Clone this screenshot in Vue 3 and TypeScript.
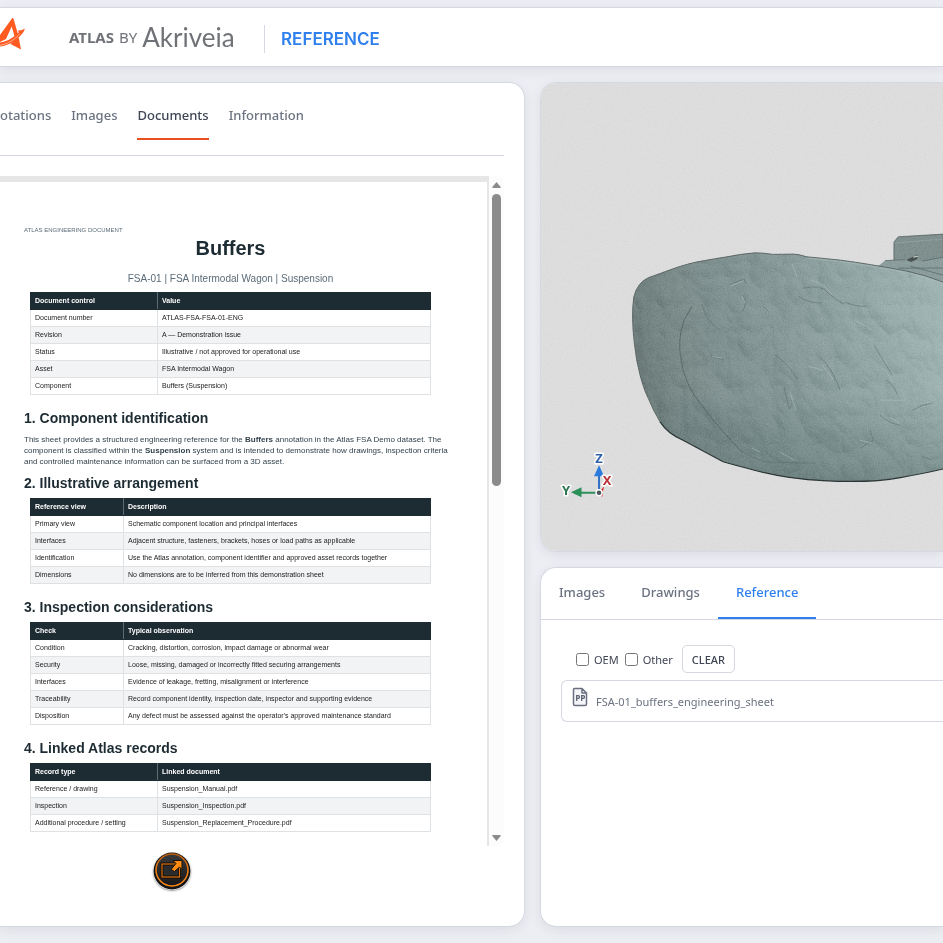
<script setup lang="ts">
import { ref } from 'vue'

interface DocTable {
  head: [string, string]
  rows: [string, string][]
  wide: boolean
}

const mainTabs = ['otations', 'Images', 'Documents', 'Information']
const activeMain = ref('Documents')
const refTabs = ['Images', 'Drawings', 'Reference']
const activeRef = ref('Reference')
const oem = ref(false)
const other = ref(false)

const control: DocTable = {
  head: ['Document control', 'Value'],
  wide: true,
  rows: [
    ['Document number', 'ATLAS-FSA-FSA-01-ENG'],
    ['Revision', 'A — Demonstration issue'],
    ['Status', 'Illustrative / not approved for operational use'],
    ['Asset', 'FSA Intermodal Wagon'],
    ['Component', 'Buffers (Suspension)'],
  ],
}

const sections: { title: string; table: DocTable }[] = [
  {
    title: '2. Illustrative arrangement',
    table: {
      head: ['Reference view', 'Description'],
      wide: false,
      rows: [
        ['Primary view', 'Schematic component location and principal interfaces'],
        ['Interfaces', 'Adjacent structure, fasteners, brackets, hoses or load paths as applicable'],
        ['Identification', 'Use the Atlas annotation, component identifier and approved asset records together'],
        ['Dimensions', 'No dimensions are to be inferred from this demonstration sheet'],
      ],
    },
  },
  {
    title: '3. Inspection considerations',
    table: {
      head: ['Check', 'Typical observation'],
      wide: false,
      rows: [
        ['Condition', 'Cracking, distortion, corrosion, impact damage or abnormal wear'],
        ['Security', 'Loose, missing, damaged or incorrectly fitted securing arrangements'],
        ['Interfaces', 'Evidence of leakage, fretting, misalignment or interference'],
        ['Traceability', 'Record component identity, inspection date, inspector and supporting evidence'],
        ['Disposition', "Any defect must be assessed against the operator's approved maintenance standard"],
      ],
    },
  },
  {
    title: '4. Linked Atlas records',
    table: {
      head: ['Record type', 'Linked document'],
      wide: true,
      rows: [
        ['Reference / drawing', 'Suspension_Manual.pdf'],
        ['Inspection', 'Suspension_Inspection.pdf'],
        ['Additional procedure / setting', 'Suspension_Replacement_Procedure.pdf'],
      ],
    },
  },
]

function clearFilters(): void {
  oem.value = false
  other.value = false
}
</script>

<template>
  <div class="page">
    <header class="topbar">
      <svg class="logo" viewBox="0 0 26 34" aria-hidden="true">
        <path d="M12.300 1 L0 18 V25 L6 22 L11.700 9.500 L15 21 L18.300 18.500 L13.500 1.500 Z" fill="#ff5a1f" />
        <path d="M0 25.500 C8 24.500 15 19.500 19 15 L17.500 13.800 L22 13 L25 11.500 L23.500 15 C18 22.500 10 28.500 0 29.500 Z" fill="#ff5a1f" />
        <path d="M14.300 23.500 L18.700 20.500 L21 32.500 L10.500 27 Z" fill="#ff5a1f" />
        <path d="M0 28.300 C8 27 15 22.500 20 16.500" fill="none" stroke="#ffffff" stroke-width="0.500" />
      </svg>
      <div class="brand">
        <span class="brand-atlas">ATLAS</span>
        <span class="brand-by">BY</span>
        <span class="brand-name">Akriveia</span>
      </div>
      <h1 class="mode">REFERENCE</h1>
    </header>

    <main class="layout">
      <section class="card documents">
        <nav class="tabs">
          <button
            v-for="tab in mainTabs"
            :key="tab"
            type="button"
            class="tab"
            :class="{ active: tab === activeMain }"
            @click="activeMain = tab"
          >{{ tab }}</button>
        </nav>

        <div class="viewer">
          <article class="sheet">
            <p class="kicker">ATLAS ENGINEERING DOCUMENT</p>
            <h2 class="doc-title">Buffers</h2>
            <p class="doc-sub">FSA-01 | FSA Intermodal Wagon | Suspension</p>
            <table class="grid wide">
              <thead>
                <tr><th v-for="h in control.head" :key="h">{{ h }}</th></tr>
              </thead>
              <tbody>
                <tr v-for="row in control.rows" :key="row[0]">
                  <td>{{ row[0] }}</td>
                  <td>{{ row[1] }}</td>
                </tr>
              </tbody>
            </table>
            <h3>1. Component identification</h3>
            <p class="body-text">
              This sheet provides a structured engineering reference for the <b>Buffers</b> annotation in the Atlas FSA Demo dataset. The<br />
              component is classified within the <b>Suspension</b> system and is intended to demonstrate how drawings, inspection criteria<br />
              and controlled maintenance information can be surfaced from a 3D asset.
            </p>
            <template v-for="s in sections" :key="s.title">
              <h3>{{ s.title }}</h3>
              <table class="grid" :class="{ wide: s.table.wide }">
                <thead>
                  <tr><th v-for="h in s.table.head" :key="h">{{ h }}</th></tr>
                </thead>
                <tbody>
                  <tr v-for="row in s.table.rows" :key="row[0]">
                    <td>{{ row[0] }}</td>
                    <td>{{ row[1] }}</td>
                  </tr>
                </tbody>
              </table>
            </template>
          </article>
          <div class="scrollbar">
            <svg viewBox="0 0 9 6" class="arrow"><path d="M4.500 0 L8.700 5 Q9 6 8 6 H1 Q0 6 .3 5 Z" fill="#8b8b8b" /></svg>
            <div class="track"><div class="thumb"></div></div>
            <svg viewBox="0 0 9 6" class="arrow"><path d="M4.500 6 L8.700 1 Q9 0 8 0 H1 Q0 0 .3 1 Z" fill="#8b8b8b" /></svg>
          </div>
        </div>

        <button type="button" class="popout" aria-label="Open document">
          <svg viewBox="0 0 38 38">
            <defs>
              <linearGradient id="disc" x1="0" y1="0" x2="0" y2="1">
                <stop offset="0" stop-color="#3a3a3c" />
                <stop offset="1" stop-color="#18181a" />
              </linearGradient>
              <linearGradient id="ring" x1="0" y1="0" x2="0" y2="1">
                <stop offset="0" stop-color="#b85c0c" />
                <stop offset="0.500" stop-color="#f07d10" />
                <stop offset="1" stop-color="#ff8a14" />
              </linearGradient>
            </defs>
            <circle cx="19" cy="19" r="18.500" fill="#151517" />
            <circle cx="19" cy="18" r="16" fill="url(#disc)" stroke="url(#ring)" stroke-width="1.500" />
            <rect x="9" y="12" width="17.500" height="13" fill="#2a2b2d" stroke="#120c06" stroke-width="3" />
            <rect x="9" y="12" width="17.500" height="13" fill="none" stroke="#d9700f" stroke-width="1.200" />
            <path d="M20 8.500 H29 V17.500 L26.500 15 L21.500 19.500 L18 17.500 L23 11.500 Z" fill="#ff8c12" stroke="#161009" stroke-width="1" />
          </svg>
        </button>
      </section>

      <div class="side">
        <section class="card model" aria-label="3D model">
          <svg class="scene" viewBox="541 83 402 468" preserveAspectRatio="xMinYMin slice">
            <defs>
              <filter id="grain" x="0" y="0" width="100%" height="100%" color-interpolation-filters="sRGB">
                <feTurbulence type="fractalNoise" baseFrequency="0.7" numOctaves="2" seed="4" />
                <feColorMatrix values="1 0 0 0 0  1 0 0 0 0  1 0 0 0 0  0 0 0 0 1" />
              </filter>
              <filter id="crinkle" x="0" y="0" width="100%" height="100%" color-interpolation-filters="sRGB">
                <feTurbulence type="turbulence" baseFrequency="0.022 0.018" numOctaves="3" seed="11" result="n" />
                <feColorMatrix in="n" values="0 0 0 0 0  0 0 0 0 0  0 0 0 0 0  1 0 0 0 0" />
                <feDiffuseLighting surfaceScale="5" diffuseConstant="0.72" lighting-color="#ffffff">
                  <feDistantLight azimuth="300" elevation="45" />
                </feDiffuseLighting>
              </filter>
              <linearGradient id="hull" x1="632" y1="380" x2="943" y2="330" gradientUnits="userSpaceOnUse">
                <stop offset="0" stop-color="#6d7c7b" />
                <stop offset="0.180" stop-color="#7b8c8b" />
                <stop offset="0.600" stop-color="#8b9e9d" />
                <stop offset="1" stop-color="#9fb4b3" />
              </linearGradient>
              <linearGradient id="shade" x1="0" y1="253" x2="0" y2="481" gradientUnits="userSpaceOnUse">
                <stop offset="0.600" stop-color="#56706f" stop-opacity="0" />
                <stop offset="1" stop-color="#4b6160" stop-opacity="0.400" />
              </linearGradient>
              <clipPath id="hullClip">
                <path d="M943 282 Q925 275 906.700 271 Q870 264 840 260 Q820 258 806.700 256.700 Q798 254 793 254 L773 254.300 Q762 252.700 755 252.700 Q740 254 727 256.700 Q700 261 693 262.700 Q680 266 673 268.700 L648 277.700 Q637 283 633.700 297 Q631 316 634.300 343 Q636 360 640 375 Q644 390 648.300 398.300 Q653 410 660 421.700 Q668 434 683 440 L723 461.500 Q735 465 747 468 Q785 479 823 480.300 Q870 483 900 477.300 Q925 473 943 468.700 Z" />
              </clipPath>
            </defs>
            <rect x="541" y="83" width="402" height="468" fill="#dddddd" />

            <path d="M893.700 262 V242 L898 236.700 L943 234 V284 L880 267 L885 261 Z" fill="#80908f" stroke="#4d5a59" stroke-width="0.700" />
            <path d="M878 266 L885 260.500 L905 259.500 L922 261 L943 257 V283 Z" fill="#8b9d9c" />
            <path d="M885 260.500 L905 259.500 M922 261 L943 257 M898 268 L943 268 M910 266 L943 275" fill="none" stroke="#5d6c6b" stroke-width="0.800" />
            <path d="M906 260 L912 257 L918 254.500 L917 259 L911 262 Z" fill="#46504f" />
            <path d="M913 257 L918 256" stroke="#bccac9" stroke-width="1.200" />
            <path d="M894 243 L943 239" stroke="#97a8a7" stroke-width="0.700" />

            <g clip-path="url(#hullClip)">
              <rect x="625" y="245" width="318" height="240" fill="url(#hull)" />
              <rect x="625" y="245" width="318" height="240" fill="url(#shade)" />
              <rect class="crinkle" x="625" y="245" width="318" height="240" filter="url(#crinkle)" />
              <path d="M692 306 L684 320 Q677 340 681 360 Q685 385 700 403 Q722 432 742 452" fill="none" stroke="#586766" stroke-width="0.900" />
              <g class="creases" fill="none" stroke="#5c6c6b" stroke-width="0.900">
                <path d="M730 284 L744 279 L746 284 M743 295 Q748 302 742 312 M763 306 L768 311 M802 288 Q822 284 828 293 Q836 300 844 304 M798 296 Q808 303 822 303 M845 302 Q856 307 866 306 M702 304 Q706 322 720 330 M710 355 L724 360 M775 355 Q790 365 797 379 M820 357 Q832 368 840 390 M874 345 L884 362 L892 375 M886 380 Q893 384 897 394 M784 388 L789 409 L792 404 M880 415 Q888 423 900 425 M870 430 L873 440 L860 448 M740 450 Q760 462 770 462 L815 463 M765 450 Q772 459 782 461 M912 410 Q922 404 932 403 M922 456 L932 460" />
              </g>
              <g class="creases" fill="none" stroke="#b8cac9" stroke-width="0.800">
                <path d="M792 264 L797 277 M730 286 L743 281 M811 280 Q826 284 832 295 M742 296 L745 303 M712 356 L722 358 M885 370 L893 382 M822 365 L833 379 M855 320 L872 330 M808 366 L823 370 M790 393 L796 410 M860 440 L872 443 M780 452 L794 460 M752 448 L760 452 M890 417 L899 423 M880 400 L906 400" />
              </g>
              <path d="M806.700 256.700 L840 260 L880 266 L906.700 271 L943 282" fill="none" stroke="#abc0be" stroke-width="4" stroke-opacity="0.500" />
            </g>
            <path d="M943 282 Q925 275 906.700 271 Q870 264 840 260 Q820 258 806.700 256.700 Q798 254 793 254 L773 254.300 Q762 252.700 755 252.700 Q740 254 727 256.700 Q700 261 693 262.700 Q680 266 673 268.700 L648 277.700 Q637 283 633.700 297 Q631 316 634.300 343 Q636 360 640 375 Q644 390 648.300 398.300 Q653 410 660 421.700" fill="none" stroke="#56615f" stroke-width="0.900" />
            <path d="M660 421.700 Q668 434 683 440 L723 461.500 Q735 465 747 468 Q785 479 823 480.300 Q870 483 900 477.300 Q925 473 943 468.700" fill="none" stroke="#2b3434" stroke-width="1.200" />
            <rect class="grain" x="541" y="83" width="402" height="468" filter="url(#grain)" />

            <g class="axes">
              <path d="M599 492 V475" stroke="#2f6fc4" stroke-width="2" />
              <path d="M599 465 L604 476 H594 Z" fill="#2a7ade" />
              <path d="M599 492.500 H581" stroke="#2e8f5c" stroke-width="2" />
              <path d="M571 492 L581.500 487 V497 Z" fill="#2a9058" />
              <path d="M599 492 L604 486 L603 491 Z M600 493 L602 497 L603 493 Z" fill="#e02c2c" />
              <circle cx="599" cy="492.500" r="3" fill="#4d565e" stroke="#ffffff" stroke-width="1.400" />
              <text x="599" y="463">Z</text>
              <text x="566" y="495" class="y">Y</text>
              <text x="607" y="485" class="x">X</text>
            </g>
          </svg>
        </section>

        <section class="card reference">
          <nav class="ref-tabs">
            <button
              v-for="tab in refTabs"
              :key="tab"
              type="button"
              class="ref-tab"
              :class="{ active: tab === activeRef }"
              @click="activeRef = tab"
            >{{ tab }}</button>
          </nav>
          <div class="ref-body">
            <div class="filters">
              <label class="check"><input v-model="oem" type="checkbox" />OEM</label>
              <label class="check"><input v-model="other" type="checkbox" />Other</label>
              <button type="button" class="clear" @click="clearFilters">CLEAR</button>
            </div>
            <a class="file" href="#">
              <svg viewBox="0 0 16 20" class="file-icon" aria-hidden="true">
                <path d="M2.500 1.500 H10 L14.500 6 V17 Q14.500 18.500 13 18.500 H3 Q1.500 18.500 1.500 17 V2.500 Q1.500 1.500 2.500 1.500 Z M10 1.500 V6 H14.500" fill="#f4f5f8" stroke="#6b7080" stroke-width="1.500" stroke-linejoin="round" />
                <path d="M4.700 14 V8.700 H6.200 Q7.500 8.700 7.500 10 Q7.500 11.400 6.200 11.400 H4.700 M9.700 14 V8.700 H11.200 Q12.500 8.700 12.500 10 Q12.500 11.400 11.200 11.400 H9.700" fill="none" stroke="#5c6172" stroke-width="1.300" />
              </svg>
              <span>FSA-01_buffers_engineering_sheet</span>
            </a>
          </div>
        </section>
      </div>
    </main>
  </div>
</template>

<style>
body {
  background: #edeef3;
}
</style>

<style scoped>
* {
  box-sizing: border-box;
}

.page {
  display: flex;
  flex-direction: column;
  gap: 15px;
  height: 100vh;
  min-height: 900px;
  padding: 7px 0 16px;
  overflow: hidden;
  background: #edeef3;
  font-family: 'Noto Sans', 'Open Sans', sans-serif;
  color: #6b7280;
}

button {
  font-family: inherit;
  cursor: pointer;
}

.topbar {
  display: flex;
  align-items: center;
  flex: none;
  height: 60px;
  background: #fff;
  border-top: 1px solid #d5d7e1;
  border-bottom: 1px solid #d5d7e1;
  box-shadow: 0 3px 12px rgba(40, 44, 70, 0.08);
}

.logo {
  width: 26px;
  height: 34px;
  margin-bottom: 6px;
}

.brand {
  display: flex;
  align-items: center;
  gap: 5px;
  width: 195px;
  margin-left: 43px;
  color: #6f7277;
  white-space: nowrap;
}

.brand-atlas {
  font-size: 15px;
  font-weight: 700;
}

.brand-by {
  font-size: 15px;
}

.brand-name {
  font-family: Lato, sans-serif;
  font-size: 26px;
  line-height: 32px;
}

.mode {
  margin: 3px 0 0;
  padding-left: 16px;
  border-left: 1px solid #d5d7e1;
  font-family: Inter, sans-serif;
  font-size: 17px;
  font-weight: 600;
  line-height: 28px;
  color: #2f80ed;
}

.layout {
  display: grid;
  grid-template-columns: 525fr 403fr;
  gap: 15px;
  flex: 1;
  min-height: 0;
}

.card {
  background: #fff;
  border: 1px solid #d5d9e2;
  box-shadow: 0 3px 12px rgba(40, 44, 70, 0.08);
}

.documents {
  display: flex;
  flex-direction: column;
  min-width: 0;
  padding-right: 20px;
  border-left: 0;
  border-radius: 0 16px 16px 0;
}

.tabs {
  display: flex;
  gap: 20px;
  flex: none;
  height: 73px;
  padding-top: 16px;
  border-bottom: 1px solid #d5d7e1;
}

.tab {
  height: 41px;
  padding: 0 0 8px;
  border: 0;
  border-bottom: 2px solid transparent;
  background: none;
  color: #6b7280;
  font-size: 13px;
  font-weight: 500;
}

.tab.active {
  border-bottom-color: #e8501f;
  color: #3f4554;
}

.viewer {
  display: flex;
  flex: 1;
  min-height: 0;
  margin-top: 20px;
  overflow: hidden;
  border-radius: 0 8px 8px 0;
}

.sheet {
  flex: 1;
  padding: 43px 50px 0 24px;
  overflow: hidden;
  border-top: 6px solid #e6e6e6;
  border-right: 2px solid #e6e6e6;
  background: #fff;
  font-family: 'Liberation Sans', Arial, sans-serif;
  color: #1d2b33;
}

.kicker {
  margin: 0;
  font-size: 6px;
  line-height: 10px;
  color: #5a6b78;
}

.doc-title {
  margin: 1px 0 0;
  font-size: 20px;
  line-height: 24px;
  text-align: center;
}

.doc-sub {
  margin: 13px 0 7px;
  font-size: 10px;
  line-height: 12px;
  text-align: center;
  color: #5a6b78;
}

.sheet h3 {
  margin: 14px 0 6px;
  font-size: 14px;
  line-height: 18px;
}

.body-text {
  margin: 7px 0 0;
  font-size: 8px;
  line-height: 11px;
  white-space: nowrap;
  color: #33424c;
}

.sheet .body-text + h3 {
  margin-top: 7px;
}

.grid {
  width: calc(100% - 12px);
  margin: 0 6px;
  border-collapse: collapse;
  table-layout: fixed;
  font-size: 7px;
  line-height: 10px;
  color: #1a1a1a;
}

.grid th,
.grid td {
  height: 17px;
  padding: 0 4px;
  border: 1px solid #dfe2e5;
  text-align: left;
  white-space: nowrap;
}

.grid th {
  border-color: #1d2b33;
  border-right-color: #5d6b74;
  background: #1d2b33;
  color: #fff;
}

.grid th:last-child {
  border-right-color: #1d2b33;
}

.grid th:first-child {
  width: 93px;
}

.grid.wide th:first-child {
  width: 127px;
}

.grid tbody tr:nth-child(even) {
  background: #f2f3f5;
}

.scrollbar {
  display: flex;
  flex-direction: column;
  align-items: center;
  flex: none;
  width: 15px;
  padding: 6px 0 5px;
  background: #fcfcfc;
}

.arrow {
  flex: none;
  width: 9px;
  height: 6px;
}

.track {
  flex: 1;
  padding: 6px 0;
}

.thumb {
  width: 9px;
  height: 46%;
  border-radius: 5px;
  background: #8b8b8b;
}

.popout {
  flex: none;
  width: 38px;
  height: 38px;
  margin: 6px 0 36px 153px;
  padding: 0;
  border: 0;
  border-radius: 50%;
  background: none;
  box-shadow: 0 1px 2px rgba(0, 0, 0, 0.4);
}

.popout svg {
  display: block;
}

.side {
  display: flex;
  flex-direction: column;
  gap: 15px;
  min-width: 0;
}

.side .card {
  min-height: 0;
  overflow: hidden;
  border-right: 0;
  border-radius: 16px 0 0 16px;
}

.model {
  flex: 470;
}

.scene {
  display: block;
  width: 100%;
  height: 100%;
}

.crinkle {
  mix-blend-mode: soft-light;
  opacity: 0.3;
}

.creases {
  opacity: 0.6;
}

.grain {
  mix-blend-mode: soft-light;
  opacity: 0.25;
}

.axes text {
  font-family: 'Noto Sans', sans-serif;
  font-size: 13px;
  font-weight: 700;
  text-anchor: middle;
  paint-order: stroke;
  fill: #2f62a8;
  stroke: #fff;
  stroke-width: 3px;
  stroke-linejoin: round;
}

.axes .y {
  fill: #2c7550;
}

.axes .x {
  fill: #b83238;
}

.reference {
  flex: 359;
}

.ref-tabs {
  display: flex;
  height: 52px;
  border-bottom: 1px solid #d5d7e1;
}

.ref-tab {
  padding: 0 18px 2px;
  border: 0;
  border-bottom: 2px solid transparent;
  background: none;
  color: #6b7280;
  font-size: 13px;
  font-weight: 500;
}

.ref-tab.active {
  border-bottom-color: #2f80ed;
  color: #2f80ed;
}

.ref-body {
  padding: 25px 0 0 20px;
}

.filters {
  display: flex;
  align-items: center;
  padding-left: 15px;
}

.check {
  display: flex;
  align-items: center;
  gap: 5px;
  margin-right: 6px;
  font-size: 11px;
  color: #3f4554;
}

.check input {
  width: 13px;
  height: 13px;
  margin: 0;
}

.clear {
  height: 28px;
  margin-left: 3px;
  padding: 0 9px;
  border: 1px solid #d5d7e1;
  border-radius: 5px;
  background: #fff;
  color: #3f4554;
  font-size: 11px;
  font-weight: 500;
}

.file {
  display: flex;
  align-items: center;
  gap: 8px;
  height: 42px;
  margin-top: 7px;
  padding-left: 10px;
  border: 1px solid #d5d7e1;
  border-right: 0;
  border-radius: 6px 0 0 6px;
  color: #6b7280;
  font-size: 11px;
  text-decoration: none;
}

.file-icon {
  width: 16px;
  height: 20px;
  margin-bottom: 8px;
}
</style>
